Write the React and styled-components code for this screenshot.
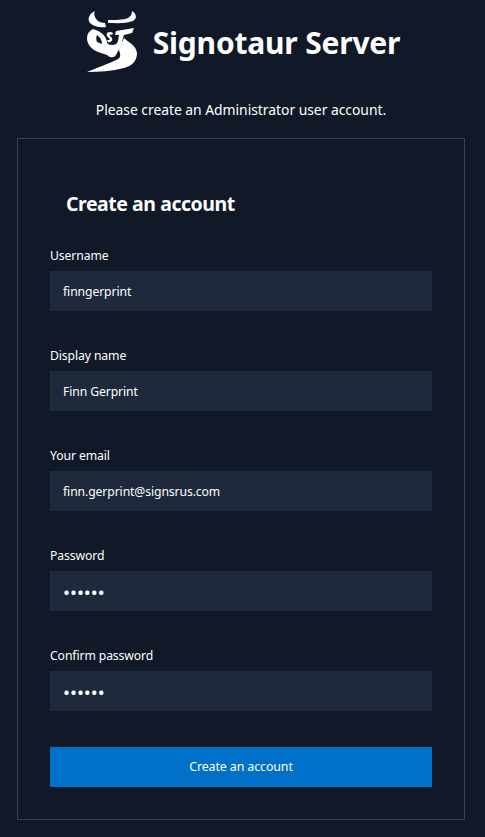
import React from "react";
import styled, { createGlobalStyle } from "styled-components";

const GlobalStyle = createGlobalStyle`
  html, body {
    margin: 0;
    padding: 0;
    background-color: #111827;
  }
  * {
    box-sizing: border-box;
  }
`;

const Page = styled.div`
  width: 485px;
  height: 837px;
  overflow: hidden;
  padding: 11px 20px 0 17px;
  background-color: #111827;
  color: white;
  font-family: "Noto Sans", "Open Sans", sans-serif;
`;

const Brand = styled.div`
  display: flex;
  justify-content: center;
  align-items: center;
  gap: 16px;
  height: 62px;
  padding-left: 5px;
`;

const BrandName = styled.span`
  font-size: 30px;
  font-weight: 700;
  letter-spacing: -0.2px;
  margin-top: 1px;
`;

const Intro = styled.p`
  margin: 26px 0 17px;
  height: 22px;
  text-align: center;
  font-size: 13.9px;
  line-height: 22px;
  letter-spacing: -0.03px;
`;

const Card = styled.form`
  width: 448px;
  height: 682px;
  padding: 50px 32px 0;
  border: 1px solid #374151;
`;

const Title = styled.h1`
  margin: 0 0 27px 16px;
  font-size: 19.5px;
  font-weight: 700;
  line-height: 30px;
  letter-spacing: -0.46px;
`;

const Fields = styled.div`
  display: flex;
  flex-direction: column;
  gap: 35px;
`;

const Field = styled.label`
  display: flex;
  flex-direction: column;
  gap: 5px;
`;

const FieldLabel = styled.span`
  height: 20px;
  font-size: 12.2px;
  line-height: 20px;
  letter-spacing: -0.1px;
`;

const Input = styled.input`
  width: 382px;
  height: 40px;
  padding: 0 13px;
  border: 0;
  border-radius: 0;
  outline: none;
  background-color: #1e293b;
  color: white;
  font-family: inherit;
  font-size: 12.2px;
  letter-spacing: -0.1px;

  &[type="password"] {
    font-size: 18.5px;
    letter-spacing: 0;
  }
`;

const Submit = styled.button`
  display: block;
  width: 382px;
  height: 40px;
  margin-top: 36px;
  padding: 0 0 2px 0;
  border: 0;
  background-color: #0070c9;
  color: white;
  font-family: inherit;
  font-size: 12.4px;
  letter-spacing: -0.1px;
`;

const BullLogo = () => (
  <svg width="50" height="62" viewBox="0 0 50 62" fill="white">
    <path d="M8 0 C2 3 0 8 3 12 C7 16 14 17 19 16 L18 12 C13 12 9 9 8 6 C7 4 7 2 8 0 Z" />
    <path d="M45 0 C50 3 50 8 46 10 C38 13 29 12 21 12 L21 9 C28 9 36 9 41 7 C44 5 45 3 45 0 Z" />
    <path
      fillRule="evenodd"
      d="M6 18 C2 20 0 23 0 27 C0 33 4 38 11 41 L20 44 C23 47 27 47 29 44 L31 40 C34 37 35 32 36 27 L37 24 L45 22 L47 17 L29 20 L28 24 L32 24 L31 30 C30 33 28 34 25 34 C22 34 20 33 20 31 C19 25 14 20 6 18 Z M10 24 C13 26 15 29 15 33 L10 31 C9 29 9 26 10 24 Z"
    />
    <path d="M20 22 C23 20 26 21 26 23 L24 24 C23 23 22 24 23 25 C26 27 26 30 23 31 C21 32 21 31 20 29 L22 29 C23 29 23 28 22 27 C20 26 19 24 20 22 Z" />
    <path d="M37 27 C41 31 49 34 50 42 C50 50 45 55 37 57 C25 60 12 61 0 61 C10 57 20 53 27 50 C32 48 34 46 33 43 C33 41 32 40 32 39 Z" />
  </svg>
);

const fields = [
  { label: "Username", value: "finngerprint", type: "text" },
  { label: "Display name", value: "Finn Gerprint", type: "text" },
  { label: "Your email", value: "finn.gerprint@signsrus.com", type: "text" },
  { label: "Password", value: "secret", type: "password" },
  { label: "Confirm password", value: "secret", type: "password" },
];

const App = () => {
  return (
    <Page>
      <GlobalStyle />
      <Brand>
        <BullLogo />
        <BrandName>Signotaur Server</BrandName>
      </Brand>
      <Intro>Please create an Administrator user account.</Intro>
      <Card onSubmit={(e) => e.preventDefault()}>
        <Title>Create an account</Title>
        <Fields>
          {fields.map((field) => (
            <Field key={field.label}>
              <FieldLabel>{field.label}</FieldLabel>
              <Input type={field.type} defaultValue={field.value} />
            </Field>
          ))}
        </Fields>
        <Submit type="submit">Create an account</Submit>
      </Card>
    </Page>
  );
};

export default App;
